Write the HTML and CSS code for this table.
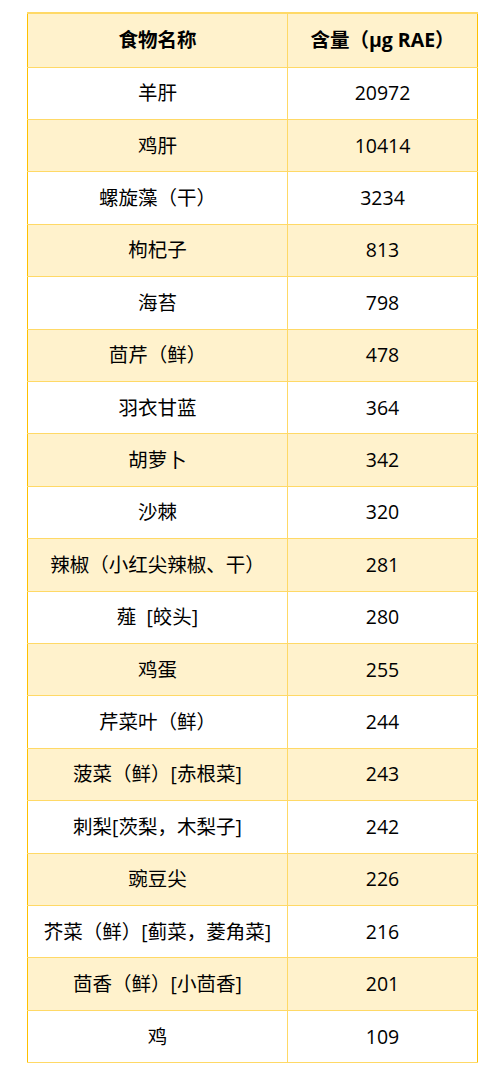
FILE: index.html
```html
<!DOCTYPE html>
<html lang="zh">
<head>
<meta charset="utf-8">
<link rel="stylesheet" href="styles.css">
</head>
<body>
<table class="vt">
  <thead>
    <tr><th class="c1">食物名称</th><th class="c2">含量（μg RAE）</th></tr>
  </thead>
  <tbody>
    <tr><td>羊肝</td><td>20972</td></tr>
    <tr><td>鸡肝</td><td>10414</td></tr>
    <tr><td>螺旋藻（干）</td><td>3234</td></tr>
    <tr><td>枸杞子</td><td>813</td></tr>
    <tr><td>海苔</td><td>798</td></tr>
    <tr><td>茴芹（鲜）</td><td>478</td></tr>
    <tr><td>羽衣甘蓝</td><td>364</td></tr>
    <tr><td>胡萝卜</td><td>342</td></tr>
    <tr><td>沙棘</td><td>320</td></tr>
    <tr><td>辣椒（小红尖辣椒、干）</td><td>281</td></tr>
    <tr><td>薤&nbsp; [皎头]</td><td>280</td></tr>
    <tr><td>鸡蛋</td><td>255</td></tr>
    <tr><td>芹菜叶（鲜）</td><td>244</td></tr>
    <tr><td>菠菜（鲜）[赤根菜]</td><td>243</td></tr>
    <tr><td>刺梨[茨梨，木梨子]</td><td>242</td></tr>
    <tr><td>豌豆尖</td><td>226</td></tr>
    <tr><td>芥菜（鲜）[蓟菜，菱角菜]</td><td>216</td></tr>
    <tr><td>茴香（鲜）[小茴香]</td><td>201</td></tr>
    <tr><td>鸡</td><td>109</td></tr>
  </tbody>
</table>
</body>
</html>
```

FILE: styles.css
```css
html, body {
  background: #ffffff;
}
body {
  margin: 0;
  padding: 12px 0 0 27px;
  font-family: "Segoe UI", "Open Sans", "Noto Sans CJK SC", sans-serif;
  color: #000;
}
.vt {
  border-collapse: collapse;
  width: 451px;
  table-layout: fixed;
  border-top: 2px solid #ffd966;
  border-left: 1px solid #ffc000;
  border-right: 1px solid #ffc000;
  border-bottom: 1px solid #ffd966;
}
.vt th, .vt td {
  border: 1px solid #ffd966;
  text-align: center;
  vertical-align: middle;
  padding: 0 4px;
  font-size: 19.5px;
  line-height: 24px;
  white-space: nowrap;
}
.vt th {
  font-weight: 700;
  background: #fff2cc;
  height: 54px;
  box-sizing: border-box;
}
.vt .c1 { width: 260px; }
.vt .c2 { width: 190px; }
.vt td {
  height: 52.42px;
  box-sizing: border-box;
}
.vt tbody tr:nth-child(even) td {
  background: #fff2cc;
}
.vt tbody tr td:first-child,
.vt thead th:first-child {
  border-left: 1px solid #ffc000;
}
.vt tbody tr td:last-child,
.vt thead th:last-child {
  border-right: 1px solid #ffc000;
}
```
